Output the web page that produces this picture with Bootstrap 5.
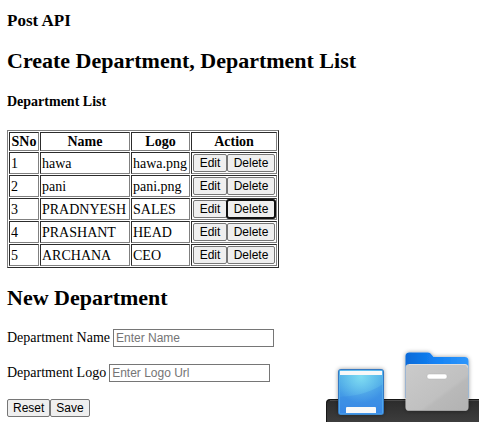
<!DOCTYPE html>
<html lang="en">
<head>
<meta charset="utf-8">
<meta name="viewport" content="width=device-width, initial-scale=1">
<title>Post API</title>
<link href="https://cdn.jsdelivr.net/npm/bootstrap@5.3.0/dist/css/bootstrap.min.css" rel="stylesheet">
<style>
  body { font-family: "Liberation Serif", "Times New Roman", serif; font-size: 14px; line-height: 17px; color: #000; }
  .page { padding: 11px 7px 0; }
  h1, h2, h3, h4 { font-weight: 700; color: #000; }
  .page-name { font-size: 17px; line-height: 19px; margin-bottom: 18px; }
  .section-title { font-size: 22px; line-height: 25px; margin-bottom: 19px; }
  .list-title { font-size: 14px; line-height: 19px; margin-bottom: 19px; }
  .dept-table { border: 1px outset gray; border-collapse: separate; border-spacing: 1px; margin-bottom: 17px; }
  .dept-table th, .dept-table td { border: 1px inset gray; line-height: 17px; }
  .dept-table td { height: 22px; padding: 1px; }
  .dept-table th { text-align: center; padding: 0 1px; }
  .col-sno { width: 30px; }
  .col-name { width: 90px; }
  .col-logo { width: 59px; }
  .col-action { width: 86px; }
  .plain-btn { font: 12px/14px "Liberation Sans", Arial, sans-serif; color: #000; background: #efefef; border: 1px solid #767676; border-radius: 2px; padding: 1px 5px; }
  .dept-table .plain-btn { flex-grow: 1; }
  .plain-btn.current { outline: 2px solid #101010; outline-offset: -1px; }
  .plain-input { font: 12px/14px "Liberation Sans", Arial, sans-serif; color: #000; border: 1px solid #767676; padding: 1px 2px; width: 161px; height: 18px; }
  .plain-input::placeholder { color: #757575; opacity: 1; }
  .field-row { gap: 3px; margin-bottom: 17px; }
  .dock { width: 153px; height: 82px; }
</style>
<script src="https://cdn.jsdelivr.net/npm/bootstrap@5.3.0/dist/js/bootstrap.bundle.min.js"></script>
</head>
<body class="bg-white">
<main class="page">
  <h3 class="page-name">Post API</h3>
  <h2 class="section-title">Create Department, Department List</h2>
  <h4 class="list-title">Department List</h4>
  <table class="dept-table">
    <thead>
      <tr><th class="col-sno" scope="col">SNo</th><th class="col-name" scope="col">Name</th><th class="col-logo" scope="col">Logo</th><th class="col-action" scope="col">Action</th></tr>
    </thead>
    <tbody>
      <tr><td>1</td><td>hawa</td><td>hawa.png</td><td><div class="d-flex"><button type="button" class="plain-btn">Edit</button><button type="button" class="plain-btn">Delete</button></div></td></tr>
      <tr><td>2</td><td>pani</td><td>pani.png</td><td><div class="d-flex"><button type="button" class="plain-btn">Edit</button><button type="button" class="plain-btn">Delete</button></div></td></tr>
      <tr><td>3</td><td>PRADNYESH</td><td>SALES</td><td><div class="d-flex"><button type="button" class="plain-btn">Edit</button><button type="button" class="plain-btn current">Delete</button></div></td></tr>
      <tr><td>4</td><td>PRASHANT</td><td>HEAD</td><td><div class="d-flex"><button type="button" class="plain-btn">Edit</button><button type="button" class="plain-btn">Delete</button></div></td></tr>
      <tr><td>5</td><td>ARCHANA</td><td>CEO</td><td><div class="d-flex"><button type="button" class="plain-btn">Edit</button><button type="button" class="plain-btn">Delete</button></div></td></tr>
    </tbody>
  </table>
  <h2 class="section-title">New Department</h2>
  <form>
    <div class="field-row d-flex"><label for="deptName">Department Name</label><input id="deptName" class="plain-input" type="text" placeholder="Enter Name"></div>
    <div class="field-row d-flex"><label for="deptLogo">Department Logo</label><input id="deptLogo" class="plain-input" type="text" placeholder="Enter Logo Url"></div>
    <div class="d-flex"><button type="reset" class="plain-btn">Reset</button><button type="button" class="plain-btn">Save</button></div>
  </form>
</main>
<svg class="dock position-fixed bottom-0 end-0" viewBox="0 0 153 82" role="img" aria-label="Dock">
  <defs>
    <linearGradient id="bar" x1="0" y1="0" x2="0" y2="1"><stop offset="0" stop-color="#2b2b2b"/><stop offset="1" stop-color="#3d3d3d"/></linearGradient>
    <linearGradient id="desk" x1="0" y1="0" x2="0" y2="1"><stop offset="0" stop-color="#4fb0e6"/><stop offset="1" stop-color="#3b8ae6"/></linearGradient>
    <radialGradient id="glow" cx=".5" cy=".15" r=".6"><stop offset="0" stop-color="#7fdcf2"/><stop offset="1" stop-color="#7fdcf2" stop-opacity="0"/></radialGradient>
    <linearGradient id="back" x1="0" y1="0" x2="1" y2="0"><stop offset="0" stop-color="#0b6ad8"/><stop offset=".5" stop-color="#1483f5"/><stop offset="1" stop-color="#2e96fb"/></linearGradient>
    <linearGradient id="front" x1="0" y1="0" x2="1" y2="1"><stop offset="0" stop-color="#cbcbcb"/><stop offset=".6" stop-color="#c0c0c0"/><stop offset=".65" stop-color="#b9b9b9"/><stop offset="1" stop-color="#b2b2b2"/></linearGradient>
    <filter id="soft" x="-20%" y="-20%" width="140%" height="140%"><feDropShadow dx="0" dy="0" stdDeviation="2" flood-color="#000" flood-opacity=".4"/></filter>
  </defs>
  <path d="M0 82V63q0-4 4-4h149v23z" fill="url(#bar)"/>
  <path d="M.5 82V63.500q0-4 4-4H153" fill="none" stroke="#161616"/>
  <path d="M4 60.500h149" stroke="#4b4b4b"/>
  <g filter="url(#soft)">
    <rect x="12" y="29" width="46" height="46" rx="3" fill="#3579c2"/>
  </g>
  <rect x="13" y="30" width="44" height="44" rx="2" fill="url(#desk)"/>
  <rect x="13" y="30" width="44" height="44" rx="2" fill="url(#glow)"/>
  <path d="M13 57Q40 56 57 44v30H13z" fill="#2f7fe2" opacity=".25"/>
  <path d="M13.500 31.500q0-1 1-1h41q1 0 1 1V73q0 1-1 1h-41q-1 0-1-1z" fill="none" stroke="#5cb8f0" opacity=".6"/>
  <path d="M14 31h42v4H14z" fill="#f8f8f8"/>
  <path d="M20 73v-5q0-1 1-1h28q1 0 1 1v5z" fill="#f8f8f8"/>
  <g filter="url(#soft)">
    <path d="M79.500 58V16q0-3.500 4-3.500h18q2 0 3 1l3 3.500h31q4 0 4 4v37z" fill="url(#back)"/>
    <rect x="79.500" y="24" width="63" height="47" rx="4" fill="url(#front)"/>
  </g>
  <path d="M83 24.500h56q2.500 0 2.500 3" fill="none" stroke="#dedede"/>
  <path d="M82 70.500h58" stroke="#a0a0a0"/>
  <rect x="101" y="34" width="20" height="5" rx="2" fill="#fff" stroke="#b0b0b0" stroke-width=".5"/>
</svg>
</body>
</html>
